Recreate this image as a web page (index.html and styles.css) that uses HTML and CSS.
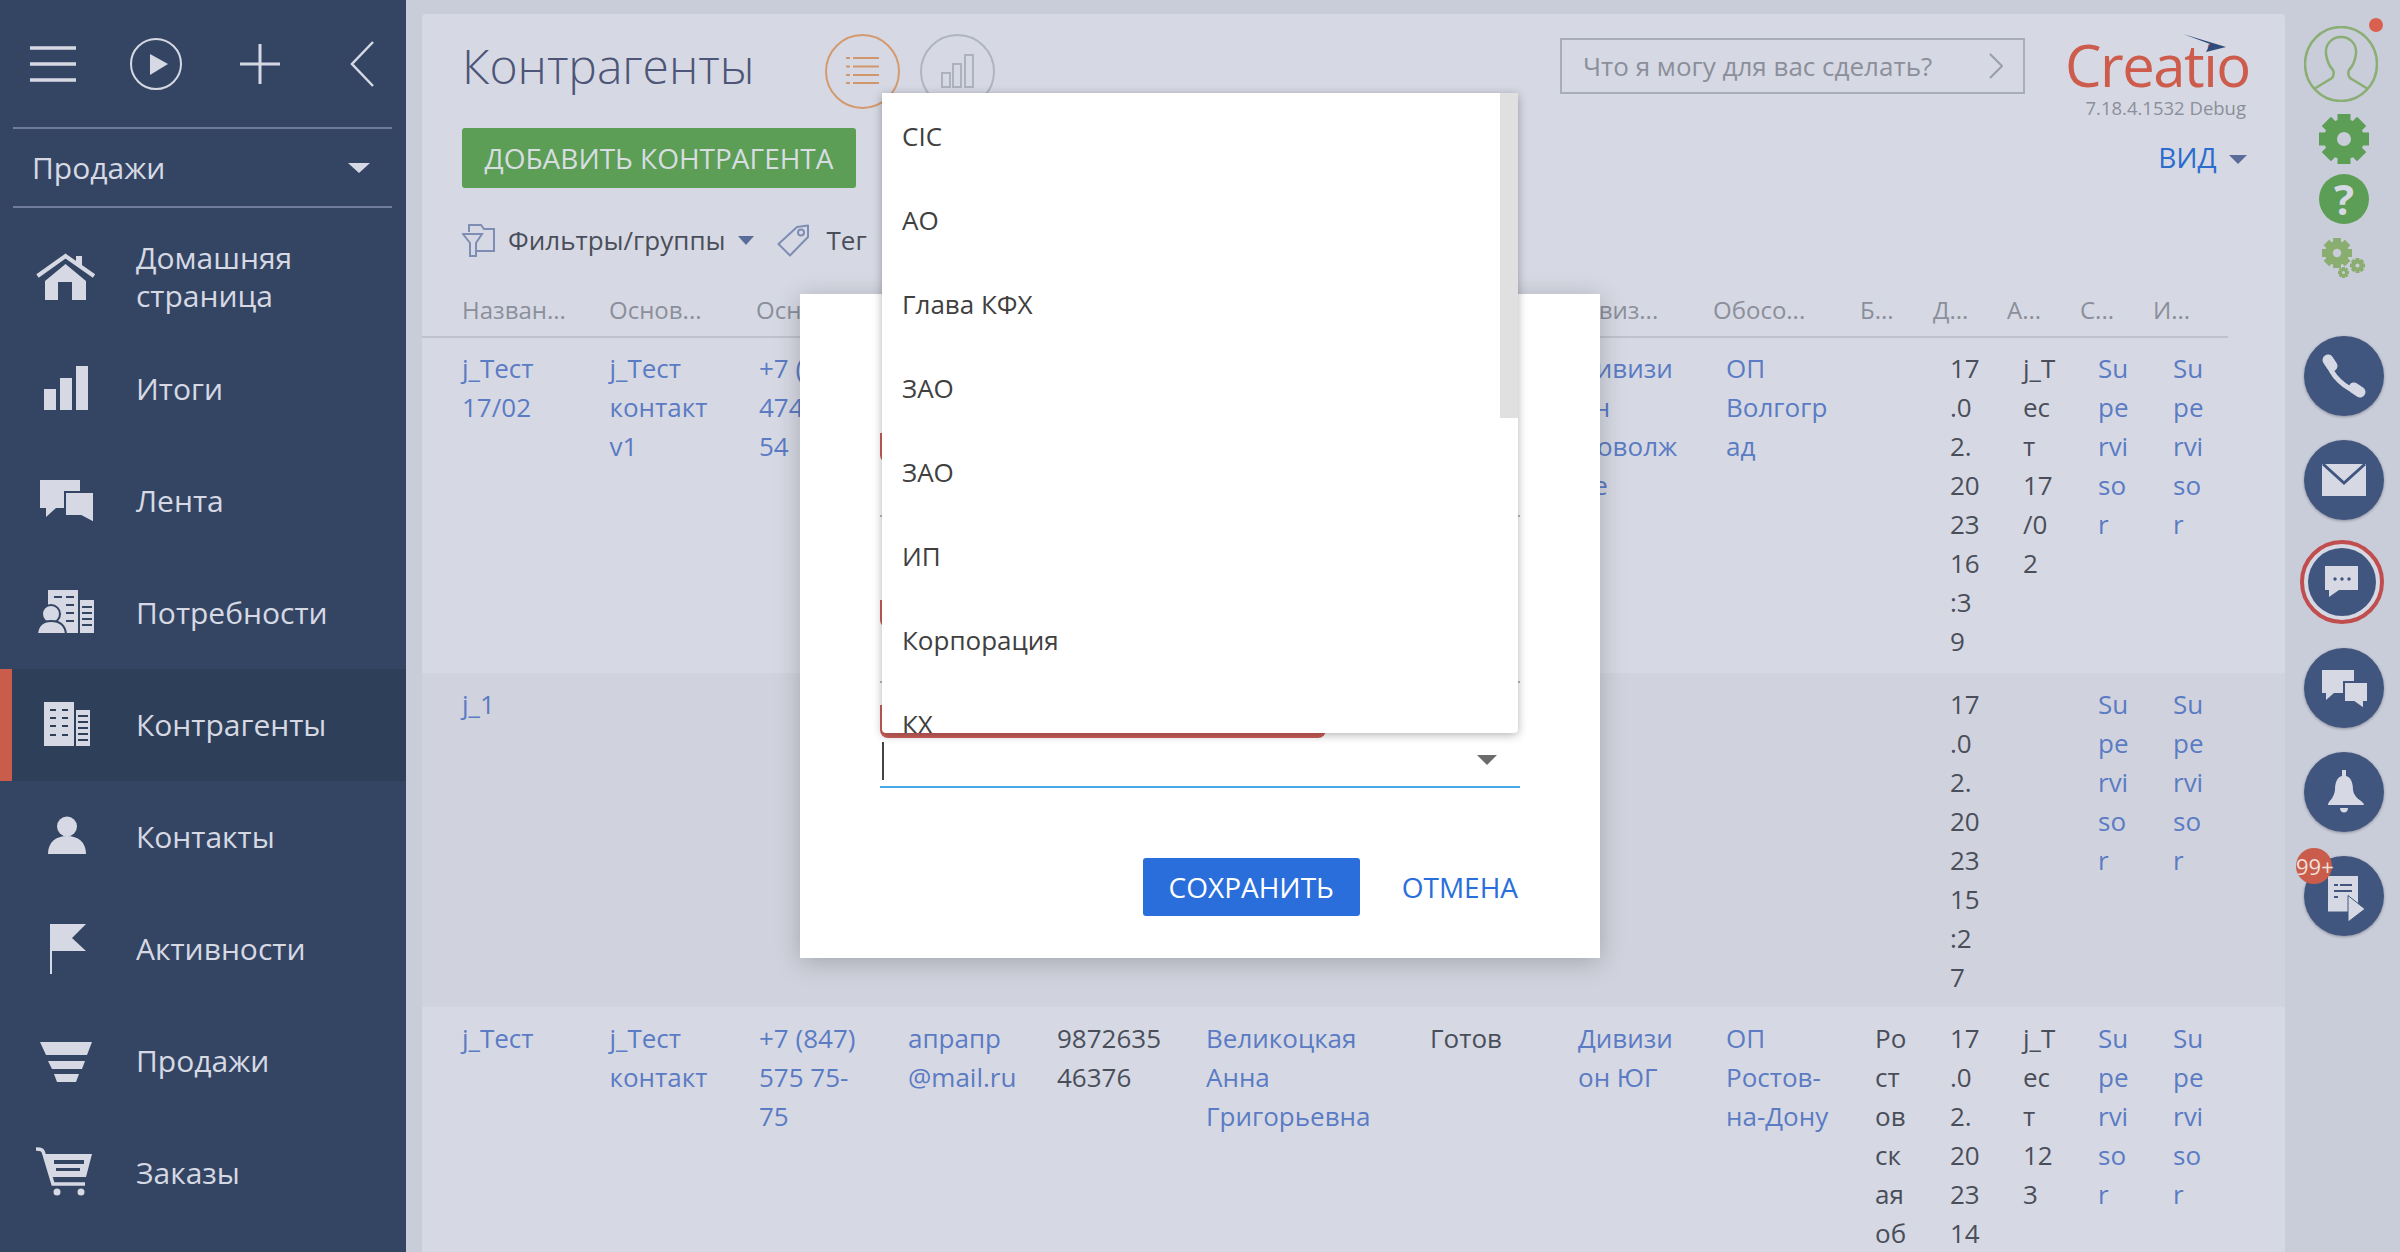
FILE: index.html
```html
<!DOCTYPE html>
<html lang="ru">
<head>
    <meta charset="UTF-8">
    <title>Контрагенты - Creatio</title>
    <link rel="stylesheet" href="styles.css">
</head>
<body>
<div class="app">
    <aside class="sidebar">
        <div class="side-tools">
            <svg class="tool-menu" width="46" height="38" viewBox="0 0 46 38"><path d="M0 3H46M0 19H46M0 35H46" stroke="#d6d9e3" stroke-width="3.5"/></svg>
            <svg class="tool-play" width="52" height="52" viewBox="0 0 52 52"><circle cx="26" cy="26" r="25" fill="none" stroke="#d6d9e3" stroke-width="2"/><path d="M20 16L38 26L20 37Z" fill="#d6d9e3"/></svg>
            <svg class="tool-plus" width="40" height="40" viewBox="0 0 40 40"><path d="M0 20H40M20 0V40" stroke="#d6d9e3" stroke-width="3"/></svg>
            <svg class="tool-back" width="24" height="46" viewBox="0 0 24 46"><path d="M23 1L2 23L23 45" fill="none" stroke="#d6d9e3" stroke-width="2.5"/></svg>
        </div>
        <div class="side-section">
            <span>Продажи</span>
            <span class="caret caret-side"></span>
        </div>
        <nav class="nav">
            <a class="nav-item">
                <svg class="nav-icon" viewBox="0 221 136 112"><path d="M37.500 276L65.500 256L94 276" fill="none" stroke="#d6d9e3" stroke-width="4"/><path d="M76 256H82V268L76 264ZM45 281L65.500 264L86 281V300H72V282H58V300H45Z" fill="#d6d9e3"/></svg>
                <span>Домашняя<br>страница</span>
            </a>
            <a class="nav-item">
                <svg class="nav-icon" viewBox="0 333 136 112"><path d="M44 389H56V410H44ZM60 378H72V410H60ZM76 366H88V410H76Z" fill="#d6d9e3"/></svg>
                <span>Итоги</span>
            </a>
            <a class="nav-item">
                <svg class="nav-icon" viewBox="0 445 136 112"><path d="M40 480H80V508H56L46 517V508H40Z" fill="#d6d9e3"/><path d="M65 492H94V523L81 516H65Z" fill="#d6d9e3" stroke="#344563" stroke-width="2"/></svg>
                <span>Лента</span>
            </a>
            <a class="nav-item">
                <svg class="nav-icon" viewBox="0 557 136 112"><path d="M48 590H78V633H48ZM80 600H94V633H80Z" fill="#d6d9e3"/><path d="M54 597H62M66 597H74M66 605H74M66 613H74M66 621H74M82 607H92M82 613H92M82 619H92M82 625H92" stroke="#344563" stroke-width="2"/><circle cx="51" cy="614" r="9" fill="#d6d9e3" stroke="#344563" stroke-width="2"/><path d="M37 634C38 624 44 621 51 621C58 621 65 624 66 634Z" fill="#d6d9e3" stroke="#344563" stroke-width="2"/></svg>
                <span>Потребности</span>
            </a>
            <a class="nav-item nav-item-active">
                <svg class="nav-icon" viewBox="0 669 136 112"><path d="M44 702H74V746H44ZM76 710H90V746H76Z" fill="#d6d9e3"/><path d="M50 710H56M62 710H68M50 718H56M62 718H68M50 726H56M62 726H68M50 735H56M62 735H68M78 716H88M78 722H88M78 728H88M78 734H88M78 740H88" stroke="#2e3f5a" stroke-width="2"/></svg>
                <span>Контрагенты</span>
            </a>
            <a class="nav-item">
                <svg class="nav-icon" viewBox="0 781 136 112"><circle cx="67" cy="826.500" r="10" fill="#d6d9e3"/><path d="M48 854C48 842 56 836 67 836C78 836 86 842 86 854Z" fill="#d6d9e3"/></svg>
                <span>Контакты</span>
            </a>
            <a class="nav-item">
                <svg class="nav-icon" viewBox="0 893 136 112"><path d="M50 924H86L72 938L86 951H52V974H50Z" fill="#d6d9e3"/></svg>
                <span>Активности</span>
            </a>
            <a class="nav-item">
                <svg class="nav-icon" viewBox="0 1005 136 112"><path d="M40 1042H92L87 1055H46ZM48 1061H85L82 1069H52ZM54 1074H79L76 1082H57Z" fill="#d6d9e3"/></svg>
                <span>Продажи</span>
            </a>
            <a class="nav-item">
                <svg class="nav-icon" viewBox="0 1117 136 112"><path d="M36 1149C42 1149 43 1150 44 1154L53 1184H85" fill="none" stroke="#d6d9e3" stroke-width="3.500"/><path d="M45 1154H92L86 1177H52ZM54 1160V1164H84V1160ZM56 1168V1171H80V1168Z" fill="#d6d9e3" fill-rule="evenodd"/><circle cx="57" cy="1192" r="3.500" fill="#d6d9e3"/><circle cx="81" cy="1192" r="3.500" fill="#d6d9e3"/></svg>
                <span>Заказы</span>
            </a>
        </nav>
    </aside>

    <main class="content">
        <section class="panel">
            <div class="panel-top">
                <h1 class="title">Контрагенты</h1>
                <span class="view-btn view-btn-on">
                    <svg width="75" height="75" viewBox="0 0 75 75"><path d="M21 24H25M28 24H54M21 32.500H25M28 32.500H54M21 41H25M28 41H54M21 49H25M28 49H54" stroke="#d0966c" stroke-width="2"/></svg>
                </span>
                <span class="view-btn">
                    <svg width="75" height="75" viewBox="0 0 75 75"><path d="M22 39H30V53H22ZM33 30H41V53H33ZM45 21H53V53H45Z" fill="none" stroke="#aeb2bf" stroke-width="2"/></svg>
                </span>
                <div class="command">
                    <span>Что я могу для вас сделать?</span>
                    <svg width="14" height="26" viewBox="0 0 14 26"><path d="M1 1L13 13L1 25" fill="none" stroke="#9a9eaa" stroke-width="2"/></svg>
                </div>
                <div class="brand">
                    <div class="brand-logo">
                        <span>Creatio</span>
                        <svg class="brand-arrow" width="44" height="18" viewBox="0 0 44 18"><path d="M0 0L43 13L23 18L27 10Z" fill="#2f4a7c"/></svg>
                    </div>
                    <div class="brand-ver">7.18.4.1532 Debug</div>
                </div>
            </div>

            <div class="action-row">
                <button class="btn-add">ДОБАВИТЬ КОНТРАГЕНТА</button>
                <span class="view-link">ВИД <span class="caret caret-view"></span></span>
            </div>

            <div class="filter-row">
                <svg width="33" height="33" viewBox="0 0 33 33"><path d="M7 8V1H19L22 5H32V27H13" fill="none" stroke="#7d8db3" stroke-width="2"/><path d="M1 10H20L14 19V32H8V19Z" fill="none" stroke="#7d8db3" stroke-width="2"/></svg>
                <span class="filter-label">Фильтры/группы</span>
                <span class="caret caret-filter"></span>
                <svg class="tag-icon" width="33" height="33" viewBox="0 0 33 33"><path d="M1.500 20L20 3L31 1.500V13L13 31.500Z" fill="none" stroke="#7d8db3" stroke-width="2" stroke-linejoin="round"/><circle cx="24" cy="8.500" r="3" fill="none" stroke="#7d8db3" stroke-width="2"/></svg>
                <span class="filter-label filter-label-tag">Тег</span>
            </div>

            <div class="grid-head">
                <div>Назван...</div><div>Основ...</div><div>Основ...</div><div></div><div></div><div></div><div></div>
                <div>Дивиз...</div><div>Обосо...</div><div>Б...</div><div>Д...</div><div>А...</div><div>С...</div><div>И...</div>
            </div>

            <div class="grid-row grid-row-first">
                <div class="lnk">j_Тест<br>17/02</div>
                <div class="lnk">j_Тест<br>контакт<br>v1</div>
                <div class="lnk">+7 (<br>474<br>54</div>
                <div></div><div></div><div></div><div></div>
                <div class="lnk">Дивизи<br>он<br>Поволж<br>ье</div>
                <div class="lnk">ОП<br>Волгогр<br>ад</div>
                <div></div>
                <div>17<br>.0<br>2.<br>20<br>23<br>16<br>:3<br>9</div>
                <div>j_T<br>ес<br>т<br>17<br>/0<br>2</div>
                <div class="lnk">Su<br>pe<br>rvi<br>so<br>r</div>
                <div class="lnk">Su<br>pe<br>rvi<br>so<br>r</div>
            </div>

            <div class="grid-row grid-row-alt">
                <div class="lnk">j_1</div>
                <div></div><div></div><div></div><div></div><div></div><div></div><div></div><div></div><div></div>
                <div>17<br>.0<br>2.<br>20<br>23<br>15<br>:2<br>7</div>
                <div></div>
                <div class="lnk">Su<br>pe<br>rvi<br>so<br>r</div>
                <div class="lnk">Su<br>pe<br>rvi<br>so<br>r</div>
            </div>

            <div class="grid-row">
                <div class="lnk">j_Тест</div>
                <div class="lnk">j_Тест<br>контакт</div>
                <div class="lnk">+7 (847)<br>575 75-<br>75</div>
                <div class="lnk">апрапр<br>@mail.ru</div>
                <div>9872635<br>46376</div>
                <div class="lnk">Великоцкая<br>Анна<br>Григорьевна</div>
                <div>Готов</div>
                <div class="lnk">Дивизи<br>он ЮГ</div>
                <div class="lnk">ОП<br>Ростов-<br>на-Дону</div>
                <div>Ро<br>ст<br>ов<br>ск<br>ая<br>об</div>
                <div>17<br>.0<br>2.<br>20<br>23<br>14</div>
                <div>j_T<br>ес<br>т<br>12<br>3</div>
                <div class="lnk">Su<br>pe<br>rvi<br>so<br>r</div>
                <div class="lnk">Su<br>pe<br>rvi<br>so<br>r</div>
            </div>
        </section>
    </main>

    <aside class="rail">
        <div class="avatar">
            <svg width="74" height="76" viewBox="0 0 74 76"><ellipse cx="37" cy="38" rx="36" ry="37" fill="none" stroke="#8aae73" stroke-width="2.500"/><path d="M10 63L28 52C30 50 30 46 29 44C25 40 23 35 22 28C21 18 28 11 37 11C46 11 53 18 52 28C51 35 49 40 45 44C44 46 44 50 46 52L64 63" fill="none" stroke="#8aae73" stroke-width="2.500"/></svg>
            <span class="avatar-dot"></span>
        </div>
        <svg class="rail-gear" width="50" height="50" viewBox="0 0 50 50">
            <symbol id="gear" viewBox="0 0 50 50"><circle cx="25" cy="25" r="13.500" fill="none" stroke="currentColor" stroke-width="13"/><path d="M18.500 0H31.500V9H18.500ZM18.500 41H31.500V50H18.500ZM0 18.500H9V31.500H0ZM41 18.500H50V31.500H41Z" fill="currentColor"/><path d="M18.500 0H31.500V9H18.500ZM18.500 41H31.500V50H18.500ZM0 18.500H9V31.500H0ZM41 18.500H50V31.500H41Z" fill="currentColor" transform="rotate(45 25 25)"/></symbol>
            <use href="#gear"/>
        </svg>
        <div class="rail-help">?</div>
        <svg class="rail-gears" width="44" height="40" viewBox="0 0 44 40">
            <use href="#gear" x="0" y="0" width="30" height="30"/>
            <use href="#gear" x="28" y="20" width="15" height="15"/>
            <use href="#gear" x="16" y="29" width="11" height="11"/>
        </svg>
        <div class="rail-calls">
            <div class="round">
                <svg width="80" height="80" viewBox="0 0 80 80"><path d="M24 25C26 39 42 54 56 56" fill="none" stroke="#d6d9e3" stroke-width="5"/><path d="M24 24L28 30M50 52L56 56" stroke="#d6d9e3" stroke-width="11" stroke-linecap="round"/></svg>
            </div>
            <div class="round">
                <svg width="80" height="80" viewBox="0 0 80 80"><path d="M18 24H62V56H18Z" fill="#d6d9e3"/><path d="M19 24L40 43L61 24" fill="none" stroke="#41567f" stroke-width="3"/></svg>
            </div>
            <div class="round-ring">
                <div class="round round-inner">
                    <svg width="68" height="68" viewBox="0 0 68 68"><path d="M17 18H50V42H31L21 49V42H17Z" fill="#d6d9e3"/><circle cx="27" cy="31" r="1.700" fill="#41567f"/><circle cx="34" cy="31" r="1.700" fill="#41567f"/><circle cx="41" cy="31" r="1.700" fill="#41567f"/></svg>
                </div>
            </div>
            <div class="round">
                <svg width="80" height="80" viewBox="0 0 80 80"><path d="M18 22H50V45H30L22 52V45H18Z" fill="#d6d9e3"/><path d="M40 34H64V54H60V61L50 54H40Z" fill="#d6d9e3" stroke="#41567f" stroke-width="2"/></svg>
            </div>
            <div class="round">
                <svg width="80" height="80" viewBox="0 0 80 80"><path d="M24 53C24 49 30 47 31 38C31 29 34 25 38 24V18H42V24C46 25 49 29 49 38C50 47 60 49 60 53Z" fill="#d6d9e3"/><path d="M36 56H44C44 62 36 62 36 56Z" fill="#d6d9e3"/></svg>
            </div>
            <div class="round">
                <svg width="80" height="80" viewBox="0 0 80 80"><path d="M24 20H54V55.500H24Z" fill="#d6d9e3"/><path d="M30 29H34M36 29H48M30 35H48M30 41H34" stroke="#41567f" stroke-width="2"/><path d="M44 39.500L61 53L44 66Z" fill="#d6d9e3" stroke="#41567f" stroke-width="1"/></svg>
                <span class="round-badge">99+</span>
            </div>
        </div>
    </aside>
</div>

<div class="modal">
    <div class="modal-form">
        <div class="field-error"></div>
        <div class="field-line field-line-a"></div>
        <div class="field-error field-error-b"></div>
        <div class="field-line field-line-b"></div>
        <div class="field-error field-error-c"></div>
        <div class="field-input">
            <span class="input-cursor"></span>
            <span class="input-arrow"></span>
        </div>
    </div>
    <div class="modal-actions">
        <button class="btn-save">СОХРАНИТЬ</button>
        <span class="btn-cancel">ОТМЕНА</span>
    </div>
</div>

<div class="dropdown">
    <div class="dropdown-thumb"></div>
    <div class="dropdown-item">CIC</div>
    <div class="dropdown-item">АО</div>
    <div class="dropdown-item">Глава КФХ</div>
    <div class="dropdown-item">ЗАО</div>
    <div class="dropdown-item">ЗАО</div>
    <div class="dropdown-item">ИП</div>
    <div class="dropdown-item">Корпорация</div>
    <div class="dropdown-item">КХ</div>
</div>
</body>
</html>
```
FILE: styles.css
```css
* {
    box-sizing: border-box;
}
html, body {
    margin: 0;
    height: 100%;
}
body {
    font-family: "Open Sans", sans-serif;
    font-size: 26px;
    line-height: 39px;
    color: #4a4e5a;
    background-color: #c9ccd9;
    overflow: hidden;
    position: relative;
}
.app {
    display: grid;
    grid-template-columns: 406px 1fr 115px;
    height: 1252px;
    overflow: hidden;
}

/* left menu */
.sidebar {
    background-color: #344563;
    color: #d6d9e3;
}
.side-tools {
    display: flex;
    align-items: center;
    height: 127px;
    padding-left: 30px;
    margin: 0 14px 0 0;
}
.tool-menu { margin-right: 54px; }
.tool-play { margin-right: 58px; }
.tool-plus { margin-right: 70px; }
.side-section {
    display: flex;
    justify-content: space-between;
    align-items: center;
    height: 81px;
    margin: 0 14px 0 13px;
    padding: 0 22px 0 19px;
    font-size: 30px;
    border-top: 2px solid #6f7d9b;
    border-bottom: 2px solid #6f7d9b;
}
.nav {
    margin-top: 13px;
}
.nav-item {
    display: flex;
    align-items: center;
    height: 112px;
    font-size: 30px;
    line-height: 38px;
}
.nav-item-active {
    background-color: #2e3f5a;
    box-shadow: inset 12px 0 0 #c95c4b;
}
.nav-icon {
    width: 136px;
    height: 112px;
    flex: none;
}
.caret {
    display: inline-block;
    width: 0;
    height: 0;
    border-style: solid;
    border-color: transparent;
    border-bottom-width: 0;
}
.caret-side {
    border-width: 10px 11px 0;
    border-top-color: #d6d9e3;
}
.caret-view {
    border-width: 9px 9px 0;
    border-top-color: #5a6c99;
    margin-left: 5px;
    vertical-align: 4px;
}
.caret-filter {
    border-width: 9px 8px 0;
    border-top-color: #5a6c99;
    margin-left: 13px;
}

/* main panel */
.content {
    padding: 14px 0 0 16px;
    min-width: 0;
}
.panel {
    height: 100%;
    background-color: #d6d9e3;
    border-radius: 4px 4px 0 0;
    overflow: hidden;
}
.panel-top {
    display: flex;
    align-items: flex-start;
    height: 75px;
    margin-top: 20px;
    padding: 0 35px 0 40px;
}
.title {
    margin: -2px 71px 0 0;
    font-size: 48px;
    line-height: 68px;
    font-weight: 300;
    color: #4d5578;
}
.view-btn {
    width: 75px;
    height: 75px;
    margin-right: 20px;
    border: 2px solid #b0b4c0;
    border-radius: 50%;
    flex: none;
}
.view-btn svg {
    display: block;
    margin: -2px;
}
.view-btn-on {
    border-color: #d49a6f;
}
.command {
    display: flex;
    justify-content: space-between;
    align-items: center;
    width: 465px;
    height: 56px;
    margin: 4px 0 0 auto;
    padding: 0 20px 0 21px;
    border: 2px solid #a9adb9;
    color: #8b8f9b;
}
.brand {
    width: 185px;
    margin: 0 0 0 40px;
}
.brand-logo {
    position: relative;
    margin-top: -3px;
    height: 68px;
    font-size: 58px;
    line-height: 68px;
    letter-spacing: -1.500px;
    color: #cd5c4c;
    white-space: nowrap;
}
.brand-arrow {
    position: absolute;
    top: 3px;
    left: 118px;
}
.brand-ver {
    margin-top: -4px;
    padding-right: 4px;
    font-size: 18.500px;
    line-height: 26px;
    color: #8b8f9b;
    text-align: right;
    white-space: nowrap;
}
.action-row {
    display: flex;
    justify-content: space-between;
    align-items: center;
    margin-top: 19px;
    height: 60px;
    padding: 0 38px 0 40px;
}
.btn-add {
    width: 394px;
    height: 60px;
    padding: 0;
    border: none;
    border-radius: 3px;
    background-color: #5c9e55;
    color: #d7dde0;
    font-family: inherit;
    font-size: 28px;
}
.view-link {
    margin-top: -1px;
    color: #2b6ccf;
    font-size: 28px;
}
.filter-row {
    display: flex;
    align-items: center;
    height: 36px;
    margin-top: 34px;
    padding-left: 40px;
}
.filter-label {
    margin-left: 13px;
    font-size: 26px;
}
.filter-label-tag {
    margin-left: 16px;
}
.tag-icon {
    margin-left: 23px;
}
.grid-head, .grid-row {
    display: grid;
    padding-left: 40px;
}
.grid-head {
    grid-template-columns: 147px 147px 147px 147px 147px 223px 147px 146px 147px 73px 74px 73px 73px 73px;
    align-items: center;
    width: 1806px;
    height: 53px;
    margin-top: 27px;
    padding-bottom: 3px;
    border-bottom: 2px solid #bfc2cd;
    color: #8b8f9b;
    font-size: 24px;
    white-space: nowrap;
}
.grid-row {
    grid-template-columns: 147.500px 149.500px 149px 149px 149px 224px 148px 148px 149px 75px 73px 75px 75px 55px;
    padding-top: 12px;
    padding-bottom: 9px;
    white-space: nowrap;
}
.grid-row-first {
    padding-top: 11px;
    padding-bottom: 12px;
}
.grid-row-alt {
    padding-bottom: 10px;
    background-color: #d0d3dd;
}
.lnk {
    color: #5b7bc4;
}

/* right rail */
.rail {
    display: flex;
    flex-direction: column;
    align-items: center;
    padding: 26px 0 0 3px;
}
.avatar {
    position: relative;
    height: 76px;
    margin-left: -6px;
}
.avatar svg {
    display: block;
}
.avatar-dot {
    position: absolute;
    top: -8px;
    right: -5px;
    width: 14px;
    height: 14px;
    border-radius: 50%;
    background-color: #d9604f;
}
.rail-gear {
    margin-top: 12px;
    color: #5c9e55;
}
.rail-help {
    width: 50px;
    height: 50px;
    margin-top: 10px;
    border-radius: 50%;
    background-color: #5c9e55;
    color: #d6d9e3;
    font-size: 42px;
    font-weight: 700;
    line-height: 50px;
    text-align: center;
}
.rail-gears {
    margin-top: 14px;
    color: #8aae6f;
}
.rail-calls {
    display: flex;
    flex-direction: column;
    align-items: center;
    gap: 24px;
    margin-top: 58px;
}
.round {
    position: relative;
    width: 80px;
    height: 80px;
    border-radius: 50%;
    background-color: #41567f;
    box-shadow: 0 1px 3px rgba(0, 0, 0, 0.3);
}
.round svg {
    display: block;
}
.round-ring {
    width: 84px;
    height: 84px;
    margin: -4px 0 0 -4px;
    padding: 4px;
    border: 4px solid #c04e4e;
    border-radius: 50%;
    background-color: #d6d9e3;
}
.round-inner {
    width: 68px;
    height: 68px;
    box-shadow: none;
}
.round-badge {
    position: absolute;
    top: -8px;
    left: -8px;
    width: 36px;
    height: 36px;
    border-radius: 50%;
    background-color: #c95c4b;
    color: #f0e0dc;
    font-size: 22px;
    line-height: 36px;
    text-align: center;
    white-space: nowrap;
}

/* dialog */
.modal {
    position: absolute;
    top: 294px;
    left: 800px;
    width: 800px;
    height: 664px;
    padding: 139px 80px 0;
    background-color: #fff;
    box-shadow: 0 4px 24px rgba(0, 0, 0, 0.22);
}
.field-error {
    width: 446px;
    height: 30px;
    border-radius: 0 0 8px 8px;
    background-color: #cb5f5a;
}
.field-error-b {
    height: 28px;
    margin-top: 83px;
}
.field-error-c {
    height: 33px;
    margin-top: 22px;
}
.field-line {
    height: 2px;
    background-color: #bbb;
}
.field-line-a {
    margin-top: 52px;
}
.field-line-b {
    margin-top: 53px;
}
.field-input {
    display: flex;
    justify-content: space-between;
    align-items: center;
    height: 50px;
    padding: 0 23px 9px 2px;
    border-bottom: 2px solid #4aa8e8;
}
.input-cursor {
    width: 2px;
    height: 38px;
    margin-top: 6px;
    background-color: #444;
}
.input-arrow {
    width: 0;
    height: 0;
    margin-top: 5px;
    border-style: solid;
    border-color: #6b6b6b transparent transparent;
    border-width: 10px 10px 0;
}
.modal-actions {
    display: flex;
    justify-content: flex-end;
    align-items: center;
    gap: 42px;
    margin-top: 70px;
    padding-right: 2px;
}
.btn-save {
    width: 217px;
    height: 58px;
    padding: 0;
    border: none;
    border-radius: 3px;
    background-color: #2a6edb;
    color: #fff;
    font-family: inherit;
    font-size: 28px;
}
.btn-cancel {
    color: #2a6edb;
    font-size: 28px;
}

/* dropdown list on top of the dialog */
.dropdown {
    position: absolute;
    top: 93px;
    left: 882px;
    width: 636px;
    height: 640px;
    padding-top: 1px;
    background-color: #fff;
    border-radius: 0 0 4px 4px;
    box-shadow: 0 2px 10px rgba(0, 0, 0, 0.3);
    overflow: hidden;
    color: #404040;
}
.dropdown-thumb {
    position: absolute;
    top: 0;
    right: 0;
    width: 18px;
    height: 325px;
    background-color: #e0e0e0;
}
.dropdown-item {
    height: 84px;
    padding-left: 20px;
    line-height: 84px;
}
```
